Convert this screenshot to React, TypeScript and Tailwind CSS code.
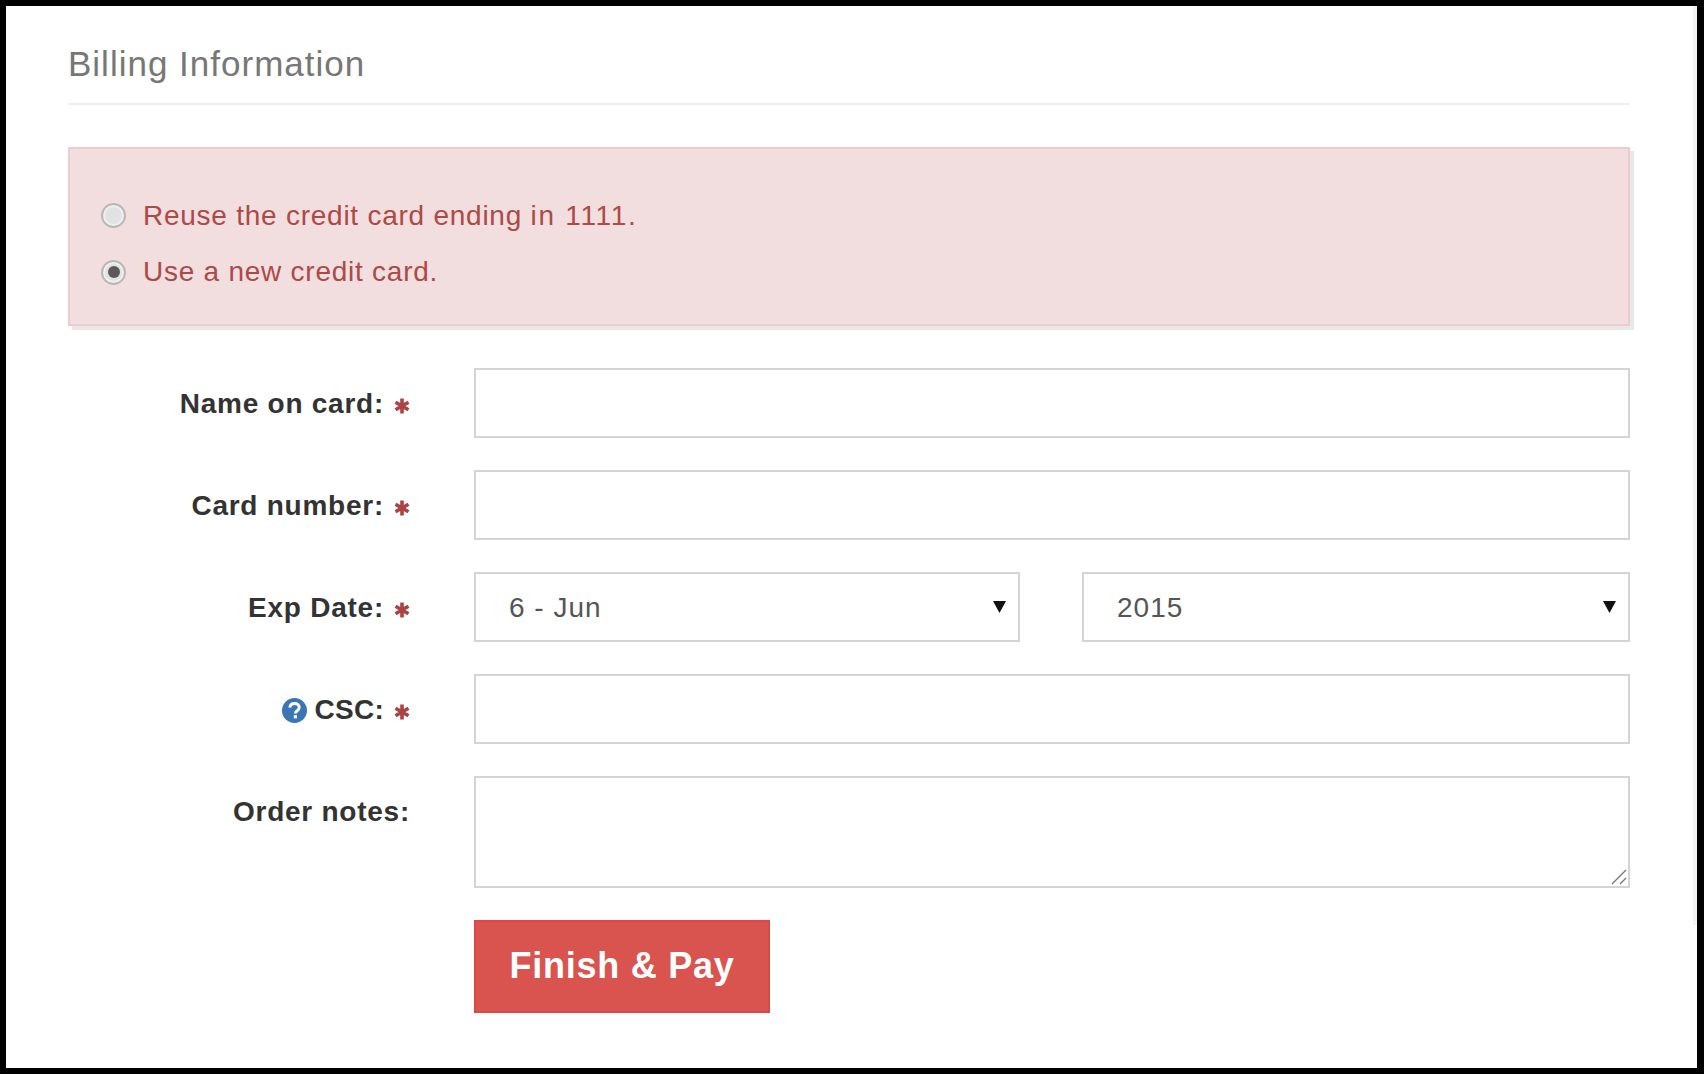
const fieldClass =
  "h-[70px] w-full border-2 border-[#d4d4d4] bg-white px-[33px] pt-[2px] text-[28px] tracking-[1px] text-[#555] outline-none";

function Asterisk() {
  return (
    <svg viewBox="0 0 16 16" className="ml-[10px] mt-[4px] h-[16px] w-[16px] shrink-0">
      <path d="M8 0.5V15.5M1.5 4.25L14.5 11.75M14.5 4.25L1.5 11.75" stroke="#a94442" strokeWidth="3.6" fill="none" />
    </svg>
  );
}

function Radio({ checked = false }: { checked?: boolean }) {
  return (
    <span className="flex h-[25px] w-[25px] shrink-0 items-center justify-center rounded-full border-2 border-[#b8b8b8] bg-[#e2e2e2] shadow-[inset_0_0_0_2px_#f0f0f0]">
      {checked && <span className="h-[12px] w-[12px] rounded-full bg-[#5a5a5a]" />}
    </span>
  );
}

function Label({ text, required = false, help = false }: { text: string; required?: boolean; help?: boolean }) {
  return (
    <div
      className={`flex h-[70px] w-[342px] shrink-0 items-center justify-end pt-[2px] text-[28px] font-bold text-[#333] ${
        help ? "tracking-[0.25px]" : "tracking-[0.75px]"
      }`}
    >
      {help && (
        <svg viewBox="0 0 25 25" className="mr-[8px] h-[25px] w-[25px] shrink-0">
          <circle cx="12.5" cy="12.5" r="12.5" fill="#3a76b4" />
          <path
            d="M7.8 9.6C8.2 6.9 10.2 5.5 12.6 5.5C15.3 5.5 17.2 7.1 17.2 9.4C17.2 11.1 16.3 12 14.9 13C13.8 13.8 13.4 14.3 13.4 15.6"
            stroke="#fff"
            strokeWidth="3"
            fill="none"
          />
          <rect x="11.8" y="17.2" width="3.2" height="3.2" fill="#fff" />
        </svg>
      )}
      <span>{text}</span>
      {required && <Asterisk />}
    </div>
  );
}

function SelectBox({ value, options, className }: { value: string; options: string[]; className: string }) {
  return (
    <div className={`relative ${className}`}>
      <select defaultValue={value} className={`${fieldClass} appearance-none rounded-none`}>
        {options.map((o) => (
          <option key={o}>{o}</option>
        ))}
      </select>
      <svg viewBox="0 0 13 12" className="pointer-events-none absolute right-[14px] top-[29px] h-[12px] w-[13px]">
        <path d="M0 0H13L6.5 12Z" fill="#111" />
      </svg>
    </div>
  );
}

export default function App() {
  return (
    <div className="flex h-screen w-full bg-black pb-[6px] pl-[6px] pr-[7px] pt-[6px] font-['Liberation_Sans',Arial,sans-serif]">
      <div className="relative flex-1 bg-white pl-[62px] pr-[67px] pt-[36px]">
        {/* faint track on the right edge */}
        <div className="absolute right-0 top-0 h-[919px] w-[4px] bg-[#f3f3f3]" />

        <h2 className="border-b-2 border-[#eee] pb-[17px] text-[35px] leading-[44px] tracking-[1px] text-[#777]">
          Billing Information
        </h2>

        <div className="mt-[42px] flex flex-col gap-[17px] border-2 border-[#ebccd1] bg-[#f2dede] pb-[32px] pl-[31px] pt-[46px] text-[28px] tracking-[0.75px] text-[#ac4a48] shadow-[4px_4px_0_#e8e8e8]">
          <label className="flex h-[40px] items-center gap-[17px] pt-[2px]">
            <span className="-mt-[2px]">
              <Radio />
            </span>
            <span>
              Reuse the credit card ending <span className="tracking-[1.7px]">in 1111.</span>
            </span>
          </label>
          <label className="flex h-[40px] items-center gap-[17px]">
            <Radio checked />
            Use a new credit card.
          </label>
        </div>

        <form className="mt-[42px] flex flex-col gap-[32px]">
          <div className="flex gap-[64px]">
            <Label text="Name on card:" required />
            <input className={fieldClass} />
          </div>
          <div className="flex gap-[64px]">
            <Label text="Card number:" required />
            <input className={fieldClass} />
          </div>
          <div className="flex gap-[64px]">
            <Label text="Exp Date:" required />
            <div className="flex flex-1 gap-[62px]">
              <SelectBox value="6 - Jun" options={["5 - May", "6 - Jun", "7 - Jul"]} className="w-[546px] shrink-0" />
              <SelectBox value="2015" options={["2014", "2015", "2016"]} className="flex-1" />
            </div>
          </div>
          <div className="flex gap-[64px]">
            <Label text="CSC:" required help />
            <input className={fieldClass} />
          </div>
          <div className="flex gap-[64px]">
            <Label text="Order notes:" />
            <div className="relative flex-1">
              <textarea className="block h-[112px] w-full resize-none border-2 border-[#d4d4d4] bg-white outline-none" />
              <svg viewBox="0 0 16 16" className="pointer-events-none absolute bottom-[3px] right-[3px] h-[16px] w-[16px]">
                <path d="M1 15L15 1M9 15L15 9" stroke="#777" strokeWidth="1.4" fill="none" />
              </svg>
            </div>
          </div>
          <div className="pl-[406px]">
            <button
              type="button"
              className="h-[93px] w-[296px] border-2 border-[#d9484a] bg-[#d9534f] pb-[2px] text-[36px] font-bold tracking-[0.75px] text-white"
            >
              Finish &amp; Pay
            </button>
          </div>
        </form>
      </div>
    </div>
  );
}
